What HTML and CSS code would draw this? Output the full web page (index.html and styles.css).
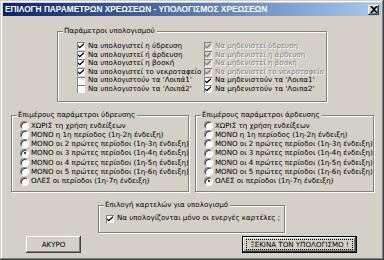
FILE: index.html
```html
<!DOCTYPE html>
<html lang="el">
<head>
<meta charset="utf-8">
<title>Επιλογή παραμέτρων χρεώσεων</title>
<link rel="stylesheet" href="styles.css">
</head>
<body>
<div class="window">
  <div class="titlebar">
    <span class="title">ΕΠΙΛΟΓΗ ΠΑΡΑΜΕΤΡΩΝ ΧΡΕΩΣΕΩΝ - ΥΠΟΛΟΓΙΣΜΟΣ ΧΡΕΩΣΕΩΝ</span>
    <span class="close"><svg viewBox="0 0 8 7" width="8" height="7"><path d="M0 0h2l2 2 2-2h2L5 3.5 8 7H6L4 5 2 7H0l3-3.5z" fill="#000"/></svg></span>
  </div>

  <div class="group calc">
    <span class="legend">Παράμετροι υπολογισμού</span>
    <div class="calc-grid">
      <div class="col">
        <div class="row"><span class="cb on"><svg viewBox="0 0 7 7"><path d="M0 2.5l2 2 5-4.5v2l-5 4.5-2-2z"/></svg></span>Να υπολογιστεί η ύδρευση</div>
        <div class="row"><span class="cb on"><svg viewBox="0 0 7 7"><path d="M0 2.5l2 2 5-4.5v2l-5 4.5-2-2z"/></svg></span>Να υπολογιστεί ή άρδευση</div>
        <div class="row"><span class="cb on"><svg viewBox="0 0 7 7"><path d="M0 2.5l2 2 5-4.5v2l-5 4.5-2-2z"/></svg></span>Να υπολογιστεί η βοσκή</div>
        <div class="row"><span class="cb on"><svg viewBox="0 0 7 7"><path d="M0 2.5l2 2 5-4.5v2l-5 4.5-2-2z"/></svg></span>Να υπολογιστεί το νεκροταφείο</div>
        <div class="row"><span class="cb"></span>Να υπολογιστούν τα 'Λοιπά1'</div>
        <div class="row"><span class="cb"></span>Να υπολογιστούν τα 'Λοιπά2'</div>
      </div>
      <div class="col">
        <div class="row disabled"><span class="cb on"><svg viewBox="0 0 7 7"><path d="M0 2.5l2 2 5-4.5v2l-5 4.5-2-2z"/></svg></span>Να μηδενιστεί ύδρευση</div>
        <div class="row disabled"><span class="cb on"><svg viewBox="0 0 7 7"><path d="M0 2.5l2 2 5-4.5v2l-5 4.5-2-2z"/></svg></span>Να μηδενιστεί η άρδευση</div>
        <div class="row disabled"><span class="cb on"><svg viewBox="0 0 7 7"><path d="M0 2.5l2 2 5-4.5v2l-5 4.5-2-2z"/></svg></span>Να μηδενιστεί η βοσκή</div>
        <div class="row disabled"><span class="cb on"><svg viewBox="0 0 7 7"><path d="M0 2.5l2 2 5-4.5v2l-5 4.5-2-2z"/></svg></span>Να μηδενιστεί το νεκροταφείο</div>
        <div class="row"><span class="cb on"><svg viewBox="0 0 7 7"><path d="M0 2.5l2 2 5-4.5v2l-5 4.5-2-2z"/></svg></span>Να μηδενιστούν τα 'Λοιπα1'</div>
        <div class="row"><span class="cb on"><svg viewBox="0 0 7 7"><path d="M0 2.5l2 2 5-4.5v2l-5 4.5-2-2z"/></svg></span>Να μηδενιστούν τα 'Λοιπα2'</div>
      </div>
    </div>
  </div>

  <div class="pair">
    <div class="group periods">
      <span class="legend">Επιμέρους παράμετροι ύδρευσης</span>
      <div class="radio-row"><span class="rb"></span>ΧΩΡΙΣ τη χρήση ενδείξεων</div>
      <div class="radio-row"><span class="rb"></span>ΜΟΝΟ η 1η περίοδος (1η-2η ένδειξη)</div>
      <div class="radio-row"><span class="rb"></span>ΜΟΝΟ οι 2 πρώτες περίοδοι (1η-3η ένδειξη)</div>
      <div class="radio-row"><span class="rb sel"></span>ΜΟΝΟ οι 3 πρώτες περίοδοι (1η-4η ένδειξη)</div>
      <div class="radio-row"><span class="rb"></span>ΜΟΝΟ οι 4 πρώτες περίοδοι (1η-5η ένδειξη)</div>
      <div class="radio-row"><span class="rb"></span>ΜΟΝΟ οι 5 πρώτες περίοδοι (1η-6η ένδειξη)</div>
      <div class="radio-row"><span class="rb"></span>ΟΛΕΣ οι περίοδοι (1η-7η ένδειξη)</div>
    </div>
    <div class="group periods">
      <span class="legend">Επιμέρους παράμετροι άρδευσης</span>
      <div class="radio-row"><span class="rb"></span>ΧΩΡΙΣ τη χρήση ενδείξεων</div>
      <div class="radio-row"><span class="rb"></span>ΜΟΝΟ η 1η περίοδος (1η-2η ένδειξη)</div>
      <div class="radio-row"><span class="rb"></span>ΜΟΝΟ οι 2 πρώτες περίοδοι (1η-3η ένδειξη)</div>
      <div class="radio-row"><span class="rb"></span>ΜΟΝΟ οι 3 πρώτες περίοδοι (1η-4η ένδειξη)</div>
      <div class="radio-row"><span class="rb"></span>ΜΟΝΟ οι 4 πρώτες περίοδοι (1η-5η ένδειξη)</div>
      <div class="radio-row"><span class="rb"></span>ΜΟΝΟ οι 5 πρώτες περίοδοι (1η-6η ένδειξη)</div>
      <div class="radio-row"><span class="rb sel"></span>ΟΛΕΣ οι περίοδοι (1η-7η ένδειξη)</div>
    </div>
  </div>

  <div class="group cards">
    <span class="legend">Επιλογή καρτελών για υπολογισμό</span>
    <div class="row"><span class="cb on"><svg viewBox="0 0 7 7"><path d="M0 2.5l2 2 5-4.5v2l-5 4.5-2-2z"/></svg></span>Να υπολογίζονται μόνο οι ενεργές καρτέλες ;</div>
  </div>

  <div class="buttons">
    <button class="btn cancel">ΑΚΥΡΟ</button>
    <button class="btn start"><span class="focus">ΞΕΚΙΝΑ ΤΟΝ ΥΠΟΛΟΓΙΣΜΟ !</span></button>
  </div>
</div>
</body>
</html>
```

FILE: styles.css
```css
* { box-sizing: border-box; }

html, body {
  margin: 0;
  padding: 0;
  background: #d4d0c8;
}

body {
  font-family: "DejaVu Sans", Verdana, sans-serif;
  font-size: 7.1px;
  color: #000;
}

.window {
  width: 384px;
  height: 260px;
  padding: 3px;
  background: #d4d0c8;
  box-shadow:
    inset -1px -1px 0 #404040,
    inset 1px 1px 0 #d4d0c8,
    inset -2px -2px 0 #808080,
    inset 2px 2px 0 #ffffff;
  overflow: hidden;
}

.titlebar {
  height: 13px;
  display: flex;
  align-items: center;
  justify-content: space-between;
  padding: 0 2px;
  background: linear-gradient(to right, #0a246a, #a6caf0);
}

.title {
  color: #fff;
  font-family: "Liberation Sans", Arial, sans-serif;
  font-weight: bold;
  font-size: 8.3px;
  line-height: 13px;
  white-space: nowrap;
}

.close {
  width: 11px;
  height: 10px;
  display: flex;
  align-items: center;
  justify-content: center;
  background: #d4d0c8;
  box-shadow:
    inset -1px -1px 0 #404040,
    inset 1px 1px 0 #ffffff,
    inset -2px -2px 0 #808080;
}

.close svg { display: block; }

/* group boxes */
.group {
  position: relative;
  border: 1px solid #808080;
  box-shadow: inset 1px 1px 0 #fff, 1px 1px 0 #fff;
}

.legend {
  position: absolute;
  top: -6px;
  left: 5px;
  padding: 0 2px 0 1px;
  line-height: 10px;
  background: #d4d0c8;
  white-space: nowrap;
}

.calc {
  width: 270px;
  height: 71px;
  margin: 15px auto 0;
  padding: 10px 0 0 19px;
}

.calc-grid {
  display: grid;
  grid-template-columns: 127px 1fr;
}

.row {
  display: flex;
  align-items: center;
  height: 8.6px;
  line-height: 8.6px;
  white-space: nowrap;
}

.cb {
  flex: none;
  width: 8px;
  height: 8px;
  margin-right: 3px;
  background: #fff;
  display: flex;
  align-items: center;
  justify-content: center;
  box-shadow:
    inset 1px 1px 0 #808080,
    inset -1px -1px 0 #ffffff;
}

.cb svg {
  display: block;
  width: 6px;
  height: 6px;
  fill: #000;
}

.disabled {
  color: #808080;
  text-shadow: 1px 1px 0 #fff;
}

.disabled .cb { background: #d4d0c8; }
.disabled .cb svg { fill: #808080; }

.pair {
  display: grid;
  grid-template-columns: 178px 179px;
  column-gap: 6px;
  margin: 13px 0 0 8px;
}

.periods {
  height: 77px;
  padding: 4.5px 0 0 8px;
}

.radio-row {
  display: flex;
  align-items: center;
  height: 9.33px;
  line-height: 9.33px;
  white-space: nowrap;
}

.rb {
  flex: none;
  position: relative;
  width: 9px;
  height: 9px;
  margin-right: 2px;
  border-radius: 50%;
  background: #fff;
  border: 1px solid;
  border-color: #808080 #ffffff #ffffff #808080;
  box-shadow: inset 1px 1px 0 #404040;
}

.rb.sel::after {
  content: "";
  position: absolute;
  left: 2.5px;
  top: 2.5px;
  width: 2px;
  height: 2px;
  border-radius: 50%;
  background: #000;
}

.cards {
  width: 187px;
  height: 28px;
  margin: 13px 0 0 95px;
  padding: 8px 0 0 7px;
}

.cards .row { height: 9px; }

.buttons {
  display: flex;
  justify-content: space-between;
  margin-top: 3px;
  padding: 0 24px 0 23px;
}

.btn {
  height: 17px;
  margin: 0;
  padding: 0;
  font-family: "DejaVu Sans", Verdana, sans-serif;
  font-size: 7.1px;
  line-height: 15px;
  color: #000;
  background: #d4d0c8;
  border: none;
  border-radius: 0;
  white-space: nowrap;
  box-shadow:
    inset -1px -1px 0 #404040,
    inset 1px 1px 0 #ffffff,
    inset -2px -2px 0 #808080;
}

.cancel { width: 55px; }

.start {
  width: 115px;
  border: 1px solid #000;
  padding: 3px 4px;
}

.focus {
  display: block;
  height: 9px;
  line-height: 9px;
  text-align: center;
  outline: 1px dotted #000;
  outline-offset: 0;
}
```
